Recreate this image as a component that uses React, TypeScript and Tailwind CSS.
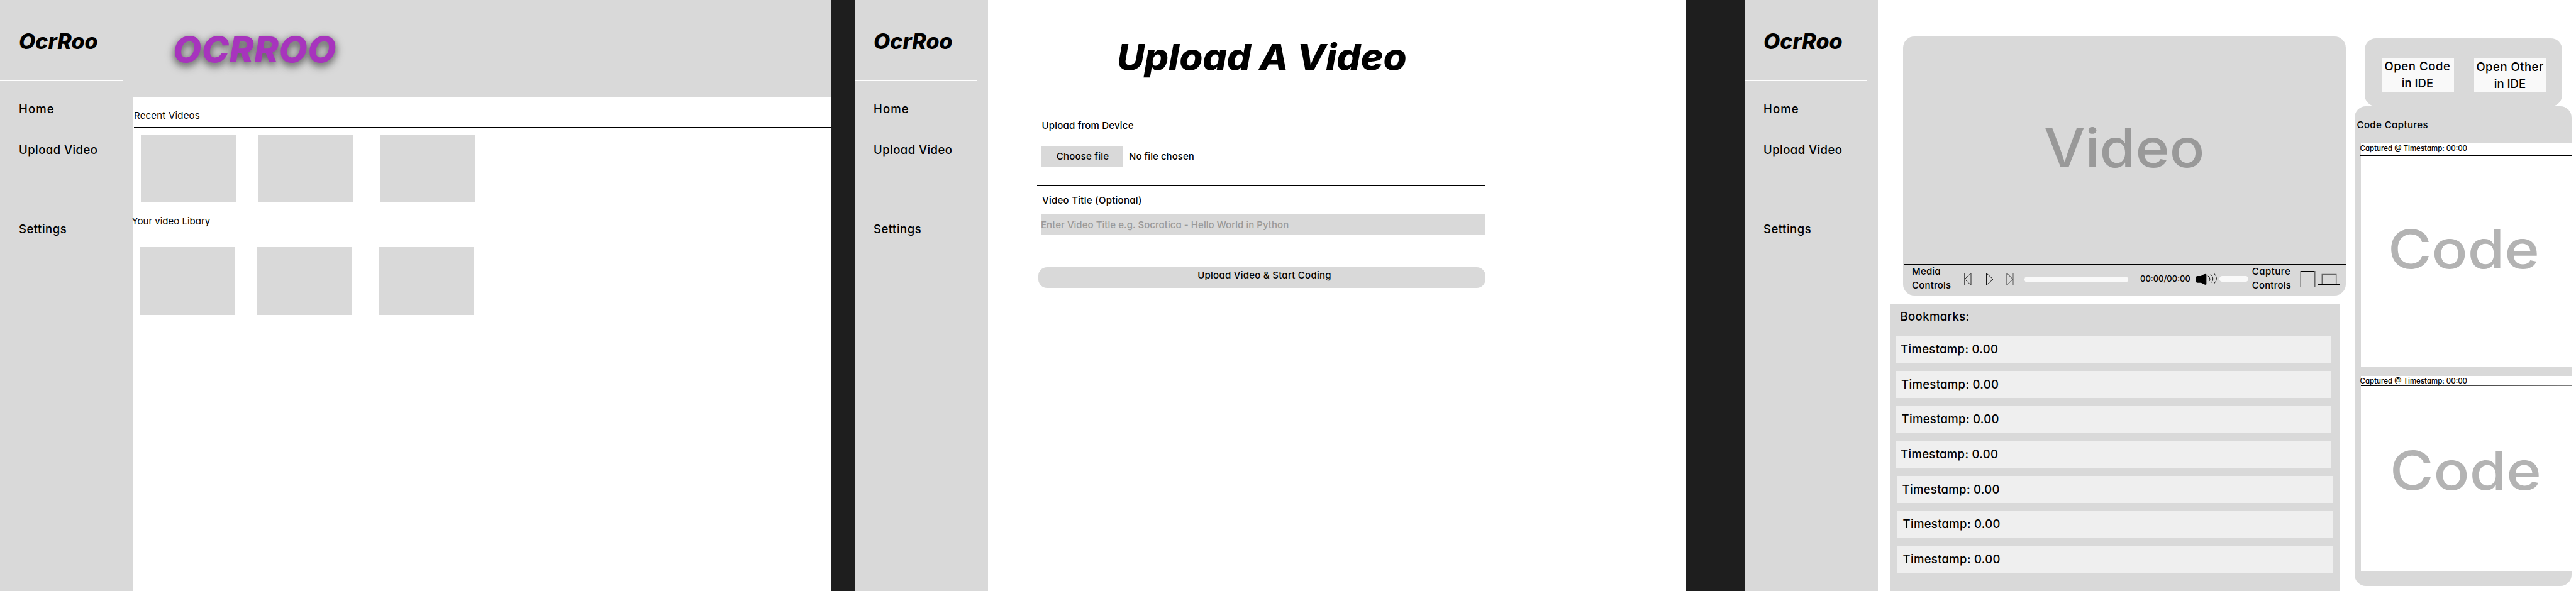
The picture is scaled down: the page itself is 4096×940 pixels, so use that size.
import type { ReactNode } from "react";

function Sidebar() {
  return (
    <aside className="flex h-full w-[212px] shrink-0 flex-col bg-[#d9d9d9]">
      <div className="mt-[45.5px] pl-[30px] text-[34px] leading-10 font-extrabold italic">OcrRoo</div>
      <div className="mt-[42.5px] h-px w-[195px] bg-white" />
      <nav className="flex flex-col pl-[30px] text-[18.5px] leading-6 font-[450]">
        <a className="mt-[32px] tracking-[1.1px]">Home</a>
        <a className="mt-[41px] tracking-[0.45px]">Upload Video</a>
        <a className="mt-[102px] tracking-[0.5px]">Settings</a>
      </nav>
    </aside>
  );
}

function Frame({ className, children }: { className: string; children: ReactNode }) {
  return (
    <section className={`flex h-full shrink-0 overflow-hidden bg-white ${className}`}>
      <Sidebar />
      {children}
    </section>
  );
}

function Thumbs() {
  return (
    <>
      <div className="h-[108px] w-[151.5px] bg-[#d9d9d9]" />
      <div className="ml-[34px] h-[108px] w-[151.5px] bg-[#d9d9d9]" />
      <div className="ml-[43px] h-[108px] w-[151.5px] bg-[#d9d9d9]" />
    </>
  );
}

function HomeFrame() {
  return (
    <Frame className="w-[1322px]">
      <main className="flex min-w-0 flex-1 flex-col">
        <header className="h-[154px] bg-[#d9d9d9] pt-[46.5px] pl-[62.5px]">
          <h1 className="origin-left scale-x-[1.025] text-[57px] leading-[64px] font-extrabold tracking-[0.6px] text-[#a734bd] italic [text-shadow:0_5px_16px_rgba(0,0,0,0.4),0_4px_10px_rgba(0,0,0,0.4)]">
            OCRROO
          </h1>
        </header>
        <h2 className="mt-5 pl-px text-[15px] leading-5 tracking-[0.2px]">Recent Videos</h2>
        <div className="mt-2 ml-px h-px bg-black" />
        <div className="mt-[11px] flex pl-3">
          <Thumbs />
        </div>
        <h2 className="mt-5 -ml-[2.5px] text-[15px] leading-5">Your video Libary</h2>
        <div className="mt-2 -ml-[3px] h-px bg-black" />
        <div className="mt-[22px] flex pl-[10.4px]">
          <Thumbs />
        </div>
      </main>
    </Frame>
  );
}

function UploadFrame() {
  return (
    <Frame className="ml-[37px] w-[1322px]">
      <main className="flex w-[791px] flex-col pl-[78px] text-[15px] leading-5 font-[450]">
        <h1 className="mt-[58.5px] ml-[127px] origin-left scale-x-[1.056] text-[57px] leading-[64px] font-extrabold whitespace-nowrap italic">
          Upload A Video
        </h1>
        <div className="mt-[53.5px] h-px bg-black" />
        <label className="mt-[12.5px] pl-[7.5px] tracking-[0.2px]">Upload from Device</label>
        <div className="mt-[23.5px] flex h-[33px] items-center pl-1.5">
          <button className="h-[33px] w-[131px] bg-[#d9d9d9] pb-px pl-0.5 tracking-[0.2px]">Choose file</button>
          <span className="ml-[9px] pb-px tracking-[0.05px]">No file chosen</span>
        </div>
        <div className="mt-[29px] h-px bg-black" />
        <label className="mt-[13px] pl-2 tracking-[0.27px]">Video Title (Optional)</label>
        <div className="mt-[12px] ml-1.5 flex h-[33px] items-center bg-[#d9d9d9] tracking-[0.04px] text-[#999999]">
          Enter Video Title e.g. Socratica - Hello World in Python
        </div>
        <div className="mt-[25px] h-px bg-black" />
        <button className="mt-[25px] ml-0.5 flex h-[33px] justify-center rounded-[14px] bg-[#d9d9d9] pt-[3px] pl-[8px] tracking-[0.26px]">
          Upload Video &amp; Start Coding
        </button>
      </main>
    </Frame>
  );
}

function ControlBar() {
  return (
    <div className="flex h-[49px] items-start pl-3.5 text-[15px] leading-[22px] font-medium">
      <div className="w-[83px] shrink-0 tracking-[0.2px]">
        Media
        <br />
        Controls
      </div>
      <svg className="mt-3 h-[22px] w-3 shrink-0" viewBox="0 0 12 22" fill="none" stroke="#000">
        <path d="M.5 1v20" stroke="#555" />
        <path d="M11 1.5v19L1 11z" strokeWidth=".8" />
      </svg>
      <svg className="mt-3 ml-[22px] h-[22px] w-[13px] shrink-0" viewBox="0 0 13 22" fill="none" stroke="#000">
        <path d="M1.5 1.5v19L12 11z" strokeWidth=".9" />
      </svg>
      <svg className="mt-3 ml-5 h-[22px] w-3 shrink-0" viewBox="0 0 12 22" fill="none" stroke="#000">
        <path d="M11 1v20" stroke="#555" />
        <path d="M1 1.5v19L10.5 11z" strokeWidth=".8" />
      </svg>
      <div className="mt-[19px] ml-[17px] h-[9px] w-[165px] shrink-0 rounded-full bg-[#f9f9f9]" />
      <span className="mt-3 ml-[19px] w-[87px] shrink-0 text-[13px] leading-5">00:00/00:00</span>
      <svg className="mt-3 h-[21.4px] w-[36.7px] shrink-0" viewBox="306 154 120 70" fill="none" stroke="#000" strokeWidth="3">
        <path
          d="M319 174h18l16-9q12-5 13 1v50q-2 6-10 2l-18-9h-18q-9-1-9-9v-18q0-7 8-8z"
          fill="#000"
          stroke="none"
        />
        <path d="M374 173q20 16 2 33M388 165q24 23 2 44M405 159q27 28 1 54" />
      </svg>
      <div className="mt-[18px] ml-[2px] h-[9px] w-[46px] shrink-0 rounded-full bg-[#f9f9f9]" />
      <div className="ml-1.5 w-[76px] shrink-0">
        <span className="tracking-[0.5px]">Capture</span>
        <br />
        <span className="tracking-[0.2px]">Controls</span>
      </div>
      <svg className="mt-2.5 h-[26px] w-[65px] shrink-0" viewBox="0 0 65 26" fill="none" stroke="#000">
        <path d="M1 .5h23M1 25.5h23" />
        <path d="M1.2 0v26M23.8 0v26" stroke="#666" strokeWidth="1.5" />
        <path d="M35.3 21V5.6h22.4V21" stroke="#666" strokeWidth="1.5" />
        <path d="M29 21.5h35" />
      </svg>
    </div>
  );
}

const bookmarks = [
  "mt-[11px] ml-[9px] pl-[8.5px]",
  "mt-[13px] ml-[9px] pl-[9.5px]",
  "mt-3 ml-[9px] pl-2.5",
  "mt-[13px] ml-[9px] pl-[8.5px]",
  "mt-[13px] ml-[11px] pl-[9px]",
  "mt-3 ml-[11px] pl-2.5",
  "mt-[13px] ml-[11px] pl-2.5",
];

function CodeFrame() {
  return (
    <Frame className="ml-[93px] w-[1322px]">
      <div className="flex w-[744px] shrink-0 flex-col">
        <div className="mt-[58px] ml-10 h-[412px] w-[704px] rounded-[18px] bg-[#d9d9d9]">
          <div className="flex h-[362px] items-center justify-center pb-[7px] text-[85px] leading-none font-medium text-[#999999]">
            <span className="scale-x-[1.085]">Video</span>
          </div>
          <div className="ml-px h-px bg-black" />
          <ControlBar />
        </div>
        <div className="mt-[13px] ml-[18.5px] flex h-[457px] w-[716px] flex-col bg-[#d9d9d9] text-[18.5px] font-medium">
          <div className="pl-[17px] leading-10 tracking-[0.4px]">Bookmarks:</div>
          {bookmarks.map((place, i) => (
            <div key={i} className={`flex h-[43px] w-[693px] shrink-0 items-center bg-[#efefef] pt-px tracking-[0.33px] ${place}`}>
              Timestamp: 0.00
            </div>
          ))}
        </div>
      </div>
      <div className="ml-3.5 flex w-[345px] shrink-0 flex-col font-medium">
        <div className="mt-[61px] ml-4 flex h-[108px] w-[314px] gap-8 rounded-[18px] bg-[#d9d9d9] pt-[31px] pl-[26.5px] text-center text-[18.5px] leading-[27px]">
          <button className="flex h-[54px] w-[115px] flex-col items-center bg-[#f9f9f9]">
            <span className="tracking-[0.6px]">Open Code</span>
            <span>in IDE</span>
          </button>
          <button className="flex h-[54px] w-[115px] flex-col items-center bg-[#f9f9f9] pt-px">
            <span className="tracking-[0.5px]">Open Other</span>
            <span>in IDE</span>
          </button>
        </div>
        <div className="flex h-[763px] flex-col rounded-[18px] bg-[#d9d9d9]">
          <div className="mt-5 pl-[3.5px] text-[15px] leading-5 tracking-[0.4px]">Code Captures</div>
          <div className="mt-0.5 -ml-px h-px bg-black" />
          <div className="mt-4 ml-2.5 flex h-[355px] flex-col bg-white">
            <div className="-ml-[1.5px] text-[11.5px] leading-4">Captured @ Timestamp: 00:00</div>
            <div className="mt-[3px] -ml-px h-px bg-black" />
            <div className="mt-[98.5px] ml-[43px] origin-left scale-x-[1.115] text-[85px] leading-[100px] text-[#b3b3b3]">
              Code
            </div>
          </div>
          <div className="mt-[15px] ml-2.5 flex h-[310px] flex-col bg-white">
            <div className="-ml-[1.5px] text-[11.5px] leading-4">Captured @ Timestamp: 00:00</div>
            <svg className="-mt-0.5 h-0.5 w-full shrink-0" viewBox="0 0 335 2" preserveAspectRatio="none">
              <path d="M0 1.5L335 1" stroke="#000" />
            </svg>
            <div className="mt-[84.5px] ml-[46px] origin-left scale-x-[1.115] text-[85px] leading-[100px] text-[#b3b3b3]">
              Code
            </div>
          </div>
        </div>
      </div>
    </Frame>
  );
}

export default function App() {
  return (
    <div className="flex h-[940px] w-[4096px] overflow-hidden bg-[#1e1e1e] font-['Inter','Noto_Sans',sans-serif] text-black [font-feature-settings:'cv11']">
      <HomeFrame />
      <UploadFrame />
      <CodeFrame />
    </div>
  );
}
